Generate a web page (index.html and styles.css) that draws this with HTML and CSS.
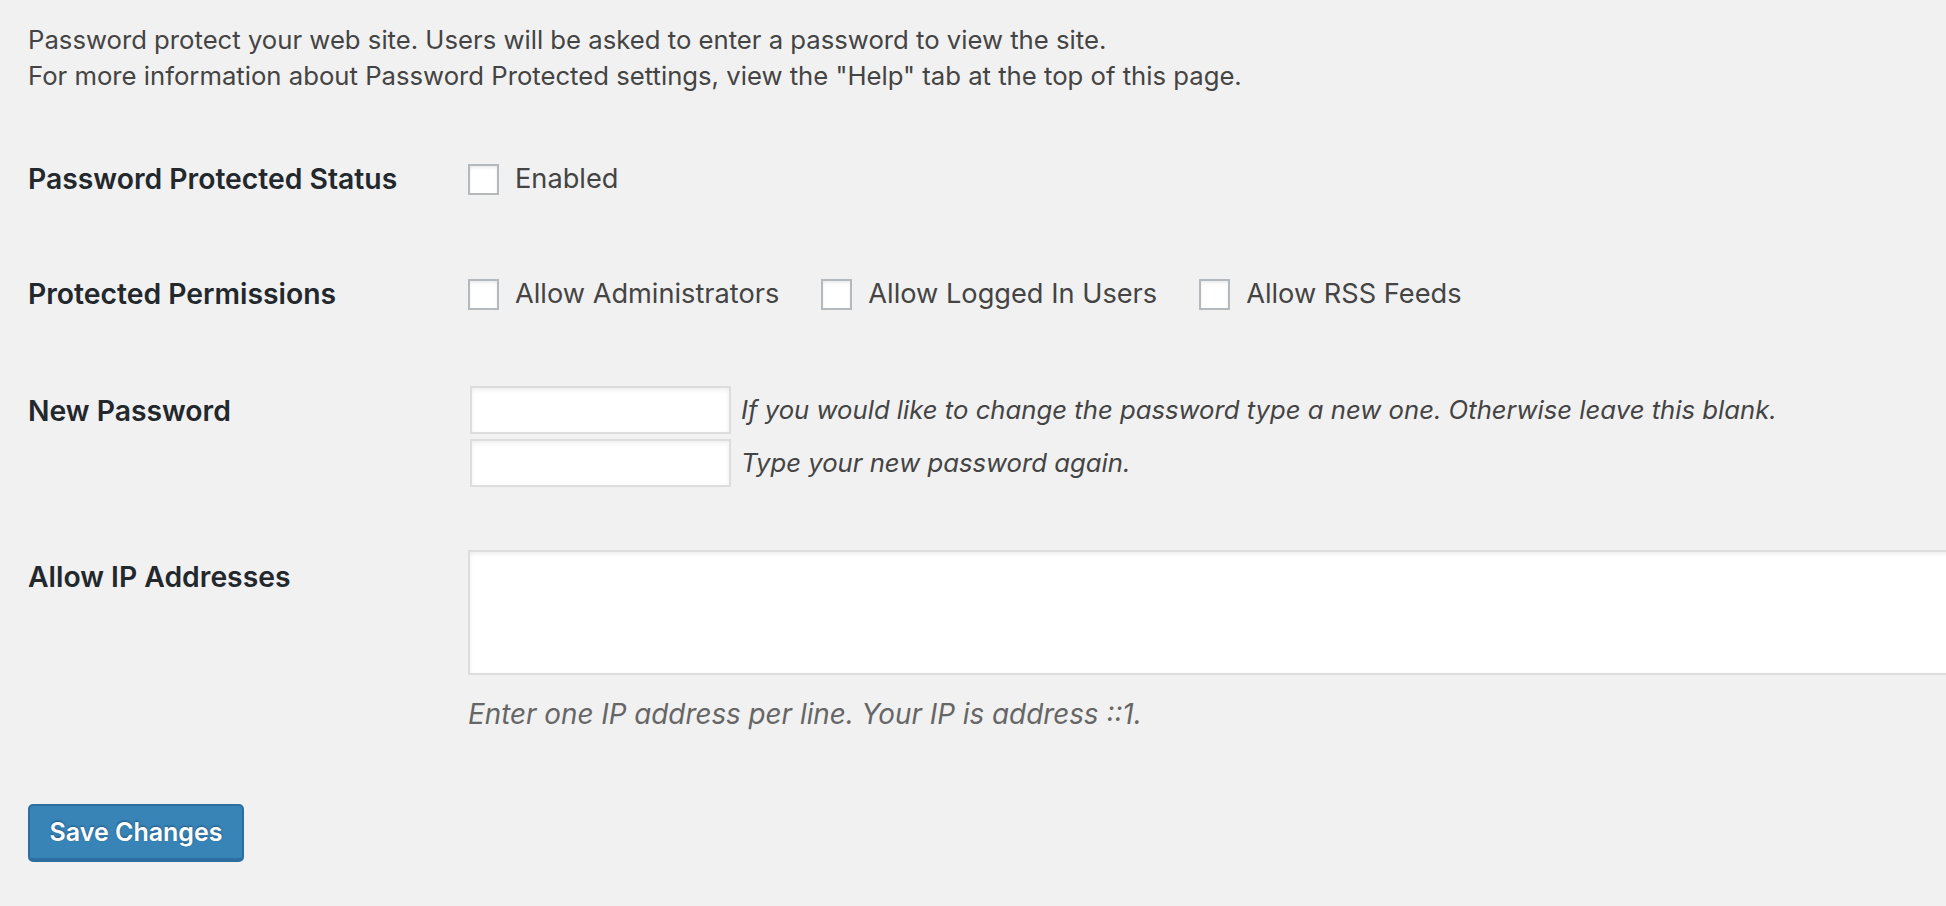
FILE: index.html
```html
<!DOCTYPE html>
<html lang="en">
<head>
<meta charset="utf-8">
<title>Password Protected</title>
<link rel="stylesheet" href="styles.css">
</head>
<body>
<div class="wrap">
  <div class="intro">
    <p>Password protect your web site. Users will be asked to enter a password to view the site.</p>
    <p>For more information about Password Protected settings, view the "Help" tab at the top of this page.</p>
  </div>
  <form class="form">
    <div class="row row-status">
      <div class="label">Password Protected Status</div>
      <div class="field">
        <label class="check"><span class="box"></span>Enabled</label>
      </div>
    </div>
    <div class="row row-perms">
      <div class="label">Protected Permissions</div>
      <div class="field checks">
        <label class="check"><span class="box"></span>Allow Administrators</label>
        <label class="check"><span class="box"></span>Allow Logged In Users</label>
        <label class="check"><span class="box"></span>Allow RSS Feeds</label>
      </div>
    </div>
    <div class="row row-pass">
      <div class="label">New Password</div>
      <div class="field stack">
        <div class="pass-line"><span class="input"></span><span class="desc">If you would like to change the password type a new one. Otherwise leave this blank.</span></div>
        <div class="pass-line"><span class="input"></span><span class="desc">Type your new password again.</span></div>
      </div>
    </div>
    <div class="row row-ip">
      <div class="label">Allow IP Addresses</div>
      <div class="field stack">
        <span class="textarea"></span>
        <p class="hint">Enter one IP address per line. Your IP is address ::1.</p>
      </div>
    </div>
    <div class="submit">
      <span class="button">Save Changes</span>
    </div>
  </form>
</div>
</body>
</html>
```
FILE: styles.css
```css
html, body {
  margin: 0;
  padding: 0;
  background: #f1f1f1;
  overflow: hidden;
}
body {
  font-family: "Inter", "Roboto", "Liberation Sans", sans-serif;
  color: #444;
  font-size: 25.7px;
  line-height: 36px;
}
.wrap {
  padding-left: 28px;
  padding-top: 22px;
}
.intro p {
  margin: 0;
}
.form {
  margin-top: 67px;
}
.row {
  display: flex;
  align-items: flex-start;
}
.label {
  width: 440px;
  flex: none;
  font-weight: 600;
  font-size: 28.3px;
  color: #23282d;
  line-height: 36px;
}
.field {
  display: flex;
  align-items: center;
}
.checks {
  gap: 42px;
}
.check {
  display: flex;
  align-items: center;
  height: 36px;
  font-size: 27.2px;
}
.box {
  width: 27px;
  height: 27px;
  border: 2px solid #b4b9be;
  background: #fff;
  box-shadow: inset 0 2px 3px rgba(0,0,0,.08);
  margin-right: 16px;
  flex: none;
}
.row-perms {
  margin-top: 79px;
}
.row-pass {
  margin-top: 74px;
}
.row-pass .label {
  padding-top: 7px;
}
.stack {
  flex-direction: column;
  align-items: flex-start;
}
.pass-line {
  display: flex;
  align-items: center;
  margin-left: 2px;
}
.pass-line + .pass-line {
  margin-top: 5px;
}
.input {
  display: block;
  width: 257px;
  height: 44px;
  border: 2px solid #ddd;
  background: #fff;
  box-shadow: inset 0 2px 4px rgba(0,0,0,.07);
  margin-right: 10px;
}
.desc {
  font-style: italic;
  color: #444;
}
.row-ip {
  margin-top: 63px;
}
.row-ip .label {
  padding-top: 9px;
}
.textarea {
  display: block;
  width: 1600px;
  height: 121px;
  border: 2px solid #ddd;
  background: #fff;
  box-shadow: inset 0 2px 4px rgba(0,0,0,.07);
}
.hint {
  margin: 21px 0 0;
  font-style: italic;
  color: #666;
  font-size: 27.8px;
}
.submit {
  margin-top: 72px;
}
.button {
  display: inline-flex;
  align-items: center;
  justify-content: center;
  box-sizing: border-box;
  width: 216px;
  height: 58px;
  background: #3884b7;
  border: 2px solid #2c6e9f;
  border-bottom-width: 4px;
  border-radius: 5px;
  color: #fff;
  font-weight: 600;
  font-size: 25px;
  text-shadow: 0 -1px 2px rgba(0,40,80,.5);
}
```
